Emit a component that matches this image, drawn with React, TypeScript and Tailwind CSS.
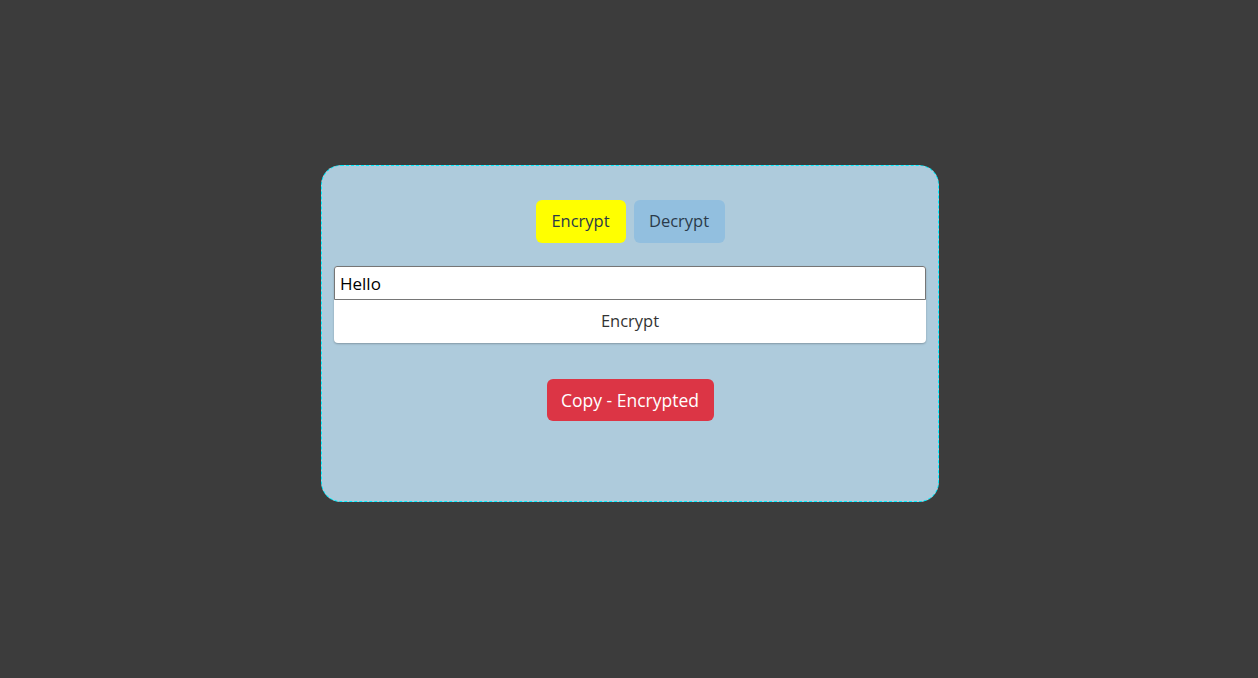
import React from "react";

export default function App() {
  return (
    <div className="w-[1258px] h-[678px] bg-[#3c3c3c] flex flex-col items-start pl-[321px] pt-[165px]" style={{ fontFamily: "'Open Sans', 'Noto Sans', sans-serif" }}>
      <div className="w-[618px] h-[337px] bg-[#aecbdc] border border-dashed border-[#00f0ff] rounded-[20px] px-[12px] pt-[34px] flex flex-col items-center">
        <div className="flex gap-[8px]">
          <button className="w-[90px] h-[43px] bg-[#ffff00] rounded-[6px] text-[16.5px] text-[#2a3a4a]">Encrypt</button>
          <button className="w-[91px] h-[43px] bg-[#92bfdf] rounded-[6px] text-[16.5px] text-[#2a3a4a]">Decrypt</button>
        </div>
        <div className="w-[592px] mt-[23px] bg-white rounded-[4px] shadow-[0_1px_2px_rgba(0,0,0,0.25)]">
          <input
            defaultValue="Hello"
            className="w-full h-[34px] border border-[#767676] rounded-t-[3px] px-[5px] text-[17px] text-black outline-none"
          />
          <div className="h-[43px] flex items-center justify-center text-[16.5px] text-[#333]">Encrypt</div>
        </div>
        <button className="mt-[36px] w-[167px] h-[42px] bg-[#dc3545] rounded-[6px] text-white text-[17.5px]">Copy - Encrypted</button>
      </div>
    </div>
  );
}
